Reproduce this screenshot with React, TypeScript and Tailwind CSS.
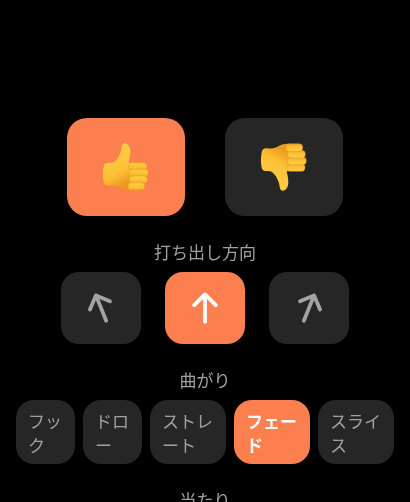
const font = { fontFamily: '"Noto Sans CJK JP", "Noto Sans", sans-serif' };

function Thumb({ down = false, id }: { down?: boolean; id: string }) {
  const fingers = [
    { x: 92, y: 68, w: 55, h: 23 },
    { x: 94, y: 88, w: 57, h: 23 },
    { x: 94, y: 108, w: 54, h: 23 },
    { x: 90, y: 128, w: 50, h: 23 },
  ];
  return (
    <svg width="56" height="56" viewBox="0 -3 168 168" className={down ? "-scale-y-100" : ""}>
      <defs>
        <linearGradient id={id} x1="0" y1="0" x2="0.35" y2="1">
          <stop offset="0" stopColor="#ffd24a" />
          <stop offset="0.72" stopColor="#fcc136" />
          <stop offset="1" stopColor="#ec9a1f" />
        </linearGradient>
        <linearGradient id={`${id}-f`} x1="0" y1="0" x2="0" y2="1">
          <stop offset="0" stopColor="#ffce42" />
          <stop offset="0.65" stopColor="#fbbd33" />
          <stop offset="1" stopColor="#ee9f22" />
        </linearGradient>
      </defs>
      {/* hand */}
      <path
        d="M24 70 C32 68 40 70 47 67 C58 60 65 46 69 32 C72 22 70 13 78 10 C89 8 97 20 97 36 C97 48 94 58 92 68 L104 70 L104 150 C90 153 76 149 64 142 C52 136 42 136 30 137 C22 137 18 132 17 124 C14 108 14 92 17 80 C18 74 20 71 24 70 Z"
        fill={`url(#${id})`}
      />
      {fingers.map((f) => (
        <rect
          key={f.y}
          x={f.x}
          y={f.y}
          width={f.w}
          height={f.h}
          rx="11"
          fill={`url(#${id}-f)`}
          stroke="#e4941f"
          strokeOpacity="0.75"
          strokeWidth="1.6"
        />
      ))}
    </svg>
  );
}

function Arrow({ className }: { className: string }) {
  return (
    <svg
      width="32"
      height="32"
      viewBox="0 0 32 32"
      fill="none"
      stroke="currentColor"
      strokeWidth="3.8"
      strokeLinecap="round"
      strokeLinejoin="round"
      className={className}
    >
      <path d="M16 2.4V29.8M5.2 13.2L16 2.4L26.8 13.2" />
    </svg>
  );
}

const shots = [
  { label: "フック", width: "w-[59px]", active: false },
  { label: "ドロー", width: "w-[59px]", active: false },
  { label: "ストレート", width: "w-[76px]", active: false },
  { label: "フェード", width: "w-[76px]", active: true },
  { label: "スライス", width: "w-[76px]", active: false },
];

export default function App() {
  return (
    <div className="h-[502px] overflow-hidden bg-black pt-[118px]" style={font}>
      <div className="flex justify-center gap-10">
        <button className="flex h-[98px] w-[118px] items-center justify-center rounded-[20px] bg-[#fb7f4f]">
          <Thumb id="up" />
        </button>
        <button className="flex h-[98px] w-[118px] items-center justify-center rounded-[20px] bg-[#262626]">
          <Thumb id="down" down />
        </button>
      </div>

      <p className="mt-6 h-6 text-center text-[17px] leading-6 text-[#a0a0a0] will-change-transform">打ち出し方向</p>
      <div className="mt-2 flex justify-center gap-6">
        <button className="flex h-[72px] w-20 items-center justify-center rounded-[18px] bg-[#262626] text-[#a3a3a3]">
          <Arrow className="-rotate-[22deg]" />
        </button>
        <button className="flex h-[72px] w-20 items-center justify-center rounded-[18px] bg-[#fb7f4f] text-white">
          <Arrow className="" />
        </button>
        <button className="flex h-[72px] w-20 items-center justify-center rounded-[18px] bg-[#262626] text-[#a3a3a3]">
          <Arrow className="rotate-[22deg]" />
        </button>
      </div>

      <p className="mt-6 h-6 text-center text-[17px] leading-6 text-[#a0a0a0] will-change-transform">曲がり</p>
      <div className="mt-2 flex justify-center gap-2">
        {shots.map((s) => (
          <button
            key={s.label}
            className={`h-16 ${s.width} rounded-[18px] px-3 pt-[9px] pb-[7px] text-left text-[17px] leading-6 will-change-transform ${
              s.active ? "bg-[#fb7f4f] font-bold text-white" : "bg-[#262626] text-[#a0a0a0]"
            }`}
          >
            {s.label}
          </button>
        ))}
      </div>

      <p className="mt-6 h-6 text-center text-[17px] leading-6 text-[#a0a0a0] will-change-transform">当たり</p>
    </div>
  );
}
